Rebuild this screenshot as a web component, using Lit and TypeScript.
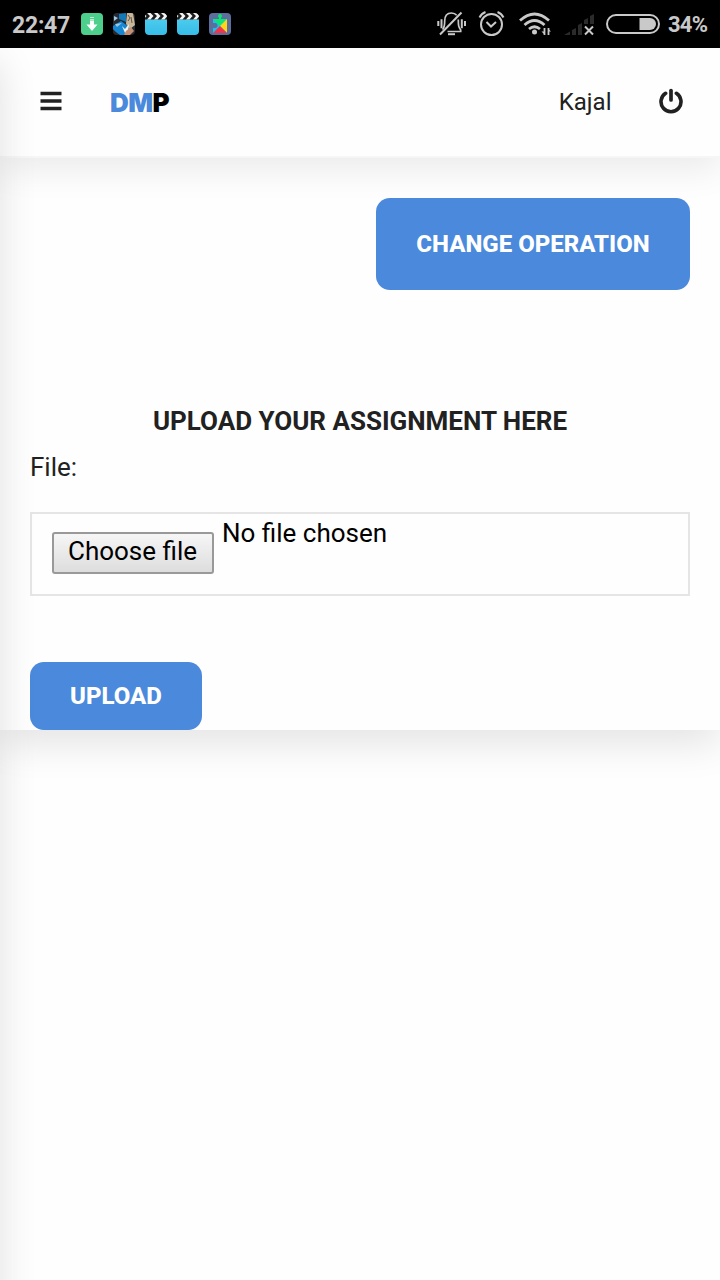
import { LitElement, html, css, svg } from "lit";
import { customElement } from "lit/decorators.js";

const clapper = () => html`<svg class="app" width="22" height="22" viewBox="0 0 22 22">
  <defs><linearGradient id="g" x2="0" y2="1"><stop stop-color="#4ccbed"/><stop offset="1" stop-color="#36bde9"/></linearGradient></defs>
  <path d="M0 6h22v13a3 3 0 0 1-3 3H3a3 3 0 0 1-3-3z" fill="url(#g)"/>
  <path d="M0 0h22v6.500H0z" fill="#1c1c1c"/>
  ${[-5, 2, 9, 16].map((x) => svg`<path d="M${x} 0h3.500l3 3-3 3.500h-3.500l3-3.500z" fill="#f4f4f4"/>`)}
</svg>`;

@customElement("status-bar")
class StatusBar extends LitElement {
  static styles = css`
    :host { display: flex; align-items: center; height: 48px; background: #000; color: #c9c9c9;
      font: 700 23px/48px Roboto, sans-serif; }
    svg { display: block; flex: none; }
    .time { width: 69px; margin-left: 12px; padding-top: 2px; height: 46px; letter-spacing: -.25px; }
    .app { margin-right: 10px; border-radius: 4px; }
    .system { display: flex; align-items: center; margin-left: auto; }
    .level { width: 52px; margin-left: 8px; font-size: 22px; padding-top: 1px; height: 47px; letter-spacing: -.8px; }
  `;
  render() {
    return html`
      <span class="time">22:47</span>
      <svg class="app" width="22" height="22" viewBox="0 0 22 22"><rect width="22" height="22" fill="#4dd08c"/>
        <path d="M9 4h4v1H9zM9 6h4v1H9z" fill="#b9edd2"/><path d="M9 7.500h4v4h3.500L11 18l-5.500-6.500H9z" fill="#fff"/></svg>
      <svg class="app" width="22" height="22" viewBox="0 0 22 22"><rect width="22" height="22" fill="#252a33"/>
        <path d="M0 13L8 8l4 3 8 6-5 5H5l-5-6z" fill="#1687d2"/><path d="M6 1l7-1v9L6 6z" fill="#1478b6"/>
        <path d="M1 3l4 2-4 3zM2 11l7-1-5 4z" fill="#9cc9df"/><path d="M14 0h6l2 12-5 4-4-5z" fill="#c7b69a"/>
        <path d="M9 13l3 3 4-5-1 8-3 1z" fill="#f2f5f5"/><path d="M13 18l5-4 3 4-4 4h-6z" fill="#c78f72"/>
        <path d="M15 2l2 3-2 3M18 4l1 6" stroke="#665540" fill="none"/><path d="M0 17l7 5H0z" fill="#302622"/></svg>
      ${clapper()}${clapper()}
      <svg class="app" width="22" height="22" viewBox="0 0 22 22"><rect width="22" height="22" fill="#5b6e9c"/>
        <path d="M4 6h14v14H4v-5h2a2 2 0 0 0 0-5H4z" fill="#17c3ee"/><path d="M4 6h14l-7 7z" fill="#0be477"/>
        <circle cx="11" cy="3" r="2" fill="#0be477"/><path d="M10 4h2v3h-2z" fill="#0be477"/>
        <path d="M18 6v14l-7-7z" fill="#ffd51c"/><path d="M4 20l7-7 7 7z" fill="#f43249"/></svg>
      <div class="system">
        <svg width="30" height="26" viewBox="437 11 30 26" fill="none" stroke="#c9c9c9" stroke-width="1.700">
          <path d="M442.500 29.500c2-2 2.200-4 2.200-8.500 0-5 2.300-8 6.800-8 2.300 0 4 .8 5.200 2.300M458.300 19.500c0 6 .2 7.500 2.400 10.500v1.500H447.500"/>
          <path d="M440 34.500L461.500 12.500" stroke-width="2"/>
          <path d="M438.300 21v5M441.500 19.200v9M461.800 19.200v9M465 21v5" stroke-width="2"/><path d="M448 34.200h7" stroke-width="2"/></svg>
        <svg width="28" height="28" viewBox="478 10 28 28" fill="none" stroke="#c9c9c9" stroke-width="2" style="margin-left:11px">
          <circle cx="491.500" cy="24.500" r="10.500"/><path d="M486.500 22l4.500 4.500 5-4.500M479.500 17.500q2-4 6-5.500M503.500 17.500q-2-4-6-5.500"/></svg>
        <svg width="33" height="26" viewBox="519 11 33 26" fill="none" stroke="#c9c9c9" stroke-width="2.800" style="margin-left:13px">
          <path d="M520 20.500q14.500-13 29 0M524.500 25q10-9 20 0M529 29q5.500-4.500 11 0"/><circle cx="534.500" cy="32" r="2.500" fill="#c9c9c9" stroke="none"/>
          <path d="M544.500 28v7M548.500 28v7" stroke-width="1.800"/><path d="M541.500 31.500h3v3zM551 31.500h-3v-3z" fill="#c9c9c9" stroke="none"/></svg>
        <svg width="32" height="26" viewBox="563 11 32 26" style="margin-left:11px">
          <path d="M564 35l6-3.500V35zM572 30l4-2v7h-4zM578 25l4-2v12h-4zM584 20l4-2v6h-4zM590 16l4-2v10h-4z" fill="#2b2b2b"/>
          <path d="M585 26.500l8 8M593 26.500l-8 8" stroke="#c9c9c9" stroke-width="2"/></svg>
        <svg width="54" height="22" viewBox="0 0 54 22" style="margin-left:11px">
          <rect x="1" y="2" width="52" height="18" rx="9" fill="none" stroke="#c9c9c9" stroke-width="2"/>
          <path d="M33.500 5H44a6 6 0 0 1 0 12h-10.500z" fill="#c9c9c9"/></svg>
        <span class="level">34%</span>
      </div>`;
  }
}

@customElement("app-root")
class AppRoot extends LitElement {
  static styles = css`
    :host { display: block; height: 1280px; overflow: hidden; background: #fefefe; color: #212121;
      font: 400 26px/40px Roboto, sans-serif; position: relative; }
    * { box-sizing: border-box; }
    status-bar { position: relative; z-index: 4; }
    .drawer { position: absolute; z-index: 3; top: 48px; left: -400px; width: 400px; height: 1400px;
      box-shadow: 0 15px 36px rgba(0, 0, 0, .12); }
    header { position: relative; z-index: 2; height: 110px; display: flex; align-items: center; background: #fefefe;
      border-bottom: 2px solid #f6f6f6; padding: 0 36px 0 40px; box-shadow: 0 12px 32px rgba(0, 0, 0, .08); }
    header svg { display: block; margin-top: -2px; }
    .brand { margin-left: 48px; font: 900 26px/40px Inter, sans-serif; color: #000; padding-top: 1px; letter-spacing: -.8px; }
    .brand b { color: #4a89dc; font-weight: 900; letter-spacing: -.6px; }
    .user { margin-left: auto; margin-right: 47.500px; font-size: 24px; }
    main { height: 572px; padding: 40px 30px 0; display: flex; flex-direction: column; align-items: flex-start;
      background: #fefefe; box-shadow: 0 15px 36px rgba(0, 0, 0, .1); }
    button { border: 0; border-radius: 14px; background: #4a89dc; color: #fff; font: 800 24px/40px Roboto, sans-serif; padding: 0; }
    .change { align-self: flex-end; width: 314px; height: 92px; }
    h1 { align-self: center; margin: 111px 0 0; font: 700 26px/40px Roboto, sans-serif; }
    .label { margin-top: 6px; }
    .file { width: 660px; height: 84px; margin-top: 25px; border: 2px solid #e5e5e5; padding: 0 20px; display: flex; color: #000; }
    .choose { width: 162px; height: 42px; margin-top: 18px; padding-right: 1px; border: 2px solid #999; border-radius: 3px; text-align: center;
      background: linear-gradient(#f6f6f6, #ddd); line-height: 35px; }
    .none { margin-left: 8px; line-height: 39px; }
    .upload { width: 172px; height: 68px; margin-top: 66px; }
  `;
  render() {
    return html`
      <status-bar></status-bar>
      <div class="drawer"></div>
      <header>
        <svg width="22" height="20" viewBox="0 0 22 20"><path d="M.5 2.500h21M.5 10h21M.5 17.500h21" stroke="#212121" stroke-width="3.400" /></svg>
        <span class="brand"><b>DM</b>P</span>
        <span class="user">Kajal</span>
        <svg width="25" height="26" viewBox="0 0 25 26" fill="none" stroke="#212121" stroke-width="3.600" stroke-linecap="round">
          <path d="M6.600 5.300a10 10 0 1 0 10.800 0"/><path d="M12 2.500v9.500" stroke-width="3.700"/></svg>
      </header>
      <main>
        <button class="change">CHANGE OPERATION</button>
        <h1>UPLOAD YOUR ASSIGNMENT HERE</h1>
        <div class="label">File:</div>
        <div class="file"><span class="choose">Choose file</span><span class="none">No file chosen</span></div>
        <button class="upload">UPLOAD</button>
      </main>`;
  }
}
